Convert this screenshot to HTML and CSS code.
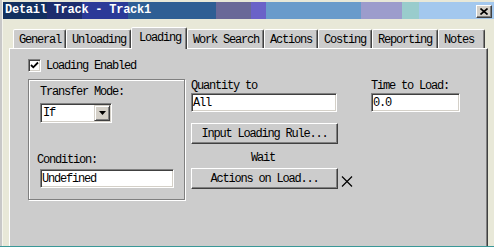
FILE: index.html
```html
<!DOCTYPE html>
<html lang="en">
<head>
    <meta charset="UTF-8">
    <title>Detail Track - Track1</title>
    <link rel="stylesheet" href="styles.css">
</head>
<body>
    <div class="window">
        <div class="titlebar">
            <span class="title">Detail Track - Track1</span>
            <button class="close">
                <svg width="8" height="7" viewBox="0 0 8 7">
                    <path d="M0.5 0.5 L7.5 6.5 M7.5 0.5 L0.5 6.5" stroke="#000" stroke-width="1.6"/>
                </svg>
            </button>
        </div>

        <div class="tabs">
            <div class="tab tab-general">General</div>
            <div class="tab tab-unloading">Unloading</div>
            <div class="tab tab-loading selected">Loading</div>
            <div class="tab tab-search">Work Search</div>
            <div class="tab tab-actions">Actions</div>
            <div class="tab tab-costing">Costing</div>
            <div class="tab tab-reporting">Reporting</div>
            <div class="tab tab-notes">Notes</div>
        </div>

        <div class="panel">
            <div class="check-row">
                <span class="checkbox">
                    <svg width="9" height="9" viewBox="0 0 9 9">
                        <polyline points="1,4 3.3,6.3 8,1.5" fill="none" stroke="#000" stroke-width="1.8"/>
                    </svg>
                </span>
                <span class="check-label">Loading Enabled</span>
            </div>

            <div class="content">
                <div class="group">
                    <div class="label">Transfer Mode:</div>
                    <div class="select">
                        <span class="select-value">If</span>
                        <span class="drop">
                            <svg width="7" height="4" viewBox="0 0 7 4"><polygon points="0,0 7,0 3.5,4" fill="#000"/></svg>
                        </span>
                    </div>
                    <div class="label condition">Condition:</div>
                    <div class="field field-condition">Undefined</div>
                </div>

                <div class="col-qty">
                    <div class="label">Quantity to</div>
                    <div class="field field-qty">All</div>
                    <button class="btn btn-rule">Input Loading Rule...</button>
                    <div class="wait">Wait</div>
                    <div class="action-row">
                        <button class="btn">Actions on Load...</button>
                        <svg class="clear" width="12" height="11" viewBox="0 0 12 11">
                            <path d="M1 0.5 L11 10.5 M11 0.5 L1 10.5" stroke="#000" stroke-width="1.2"/>
                        </svg>
                    </div>
                </div>

                <div class="col-time">
                    <div class="label">Time to Load:</div>
                    <div class="field field-time">0.0</div>
                </div>
            </div>
        </div>
    </div>
</body>
</html>
```

FILE: styles.css
```css
body {
    margin: 0;
    font-family: "Liberation Mono", "DejaVu Sans Mono", monospace;
    font-size: 12px;
    line-height: 14px;
    letter-spacing: -1.2px;
    color: #000;
}
.window {
    width: 494px;
    height: 246px;
    background: #e8e8d8;
    border-bottom: 1px solid #3a9898;
    box-shadow: inset 2px 0 #c8c8c8, inset 3px 0 #f4f4ec;
    overflow: hidden;
}
.titlebar {
    display: flex;
    justify-content: space-between;
    margin: 2px 0 0 3px;
    height: 17px;
    background: linear-gradient(to right,
        #12305f 0, #12305f 44px,
        #1d2d6e 44px, #1d2d6e 79px,
        #2b3a98 79px, #2b3a98 125px,
        #2e5e94 125px, #2e5e94 213px,
        #696898 213px, #696898 248px,
        #6a62c8 248px, #6a62c8 263px,
        #699bcb 263px, #699bcb 358px,
        #9c9ccc 358px, #9c9ccc 399px,
        #99cccc 399px, #99cccc 416px,
        #a3c8ee 416px);
}
.title {
    padding-left: 2px;
    color: #fff;
    font-weight: bold;
    line-height: 16px;
    letter-spacing: -0.25px;
}
.close {
    display: flex;
    align-items: center;
    justify-content: center;
    width: 16px;
    height: 13px;
    margin: 3px 2px 0 0;
    padding: 0;
    background: #d4d0c8;
    border: 1px solid;
    border-color: #fff #404040 #404040 #fff;
    box-shadow: inset -1px -1px #808080;
}

.tabs {
    display: flex;
    align-items: flex-end;
    height: 29px;
    padding-left: 13px;
}
.tab {
    box-sizing: border-box;
    height: 19px;
    padding: 3px 0 0 5px;
    background: #cccccc;
    border: 1px solid;
    border-bottom: none;
    border-color: #fff #404040 transparent #fff;
    border-radius: 2px 2px 0 0;
    box-shadow: inset -1px 0 #808080;
    white-space: nowrap;
}
.tab.selected {
    position: relative;
    z-index: 1;
    height: 22px;
    margin-bottom: -1px;
    padding-left: 7px;
}
.tab-general { width: 53px; }
.tab-unloading { width: 65px; }
.tab-loading { width: 56px; }
.tab-search { width: 77px; }
.tab-actions { width: 54px; }
.tab-costing { width: 54px; }
.tab-reporting { width: 66px; }
.tab-notes { width: 47px; }

.panel {
    box-sizing: border-box;
    width: 479px;
    height: 198px;
    margin-left: 9px;
    padding: 10px 0 0 18px;
    background: #cccccc;
    border-top: 1px solid #fff;
    border-left: 1px solid #fff;
    border-right: 1px solid #404040;
    box-shadow: inset -1px 0 #808080;
}
.check-row {
    display: flex;
    align-items: flex-start;
}
.checkbox {
    box-sizing: border-box;
    display: flex;
    align-items: center;
    justify-content: center;
    width: 13px;
    height: 13px;
    background: #fff;
    border: 1px solid;
    border-color: #808080 #fff #fff #808080;
    box-shadow: inset 1px 1px #404040, inset -1px -1px #d4d0c8;
}
.check-label {
    margin-left: 5px;
}

.content {
    display: flex;
    align-items: flex-start;
    margin-top: 6px;
}
.group {
    box-sizing: border-box;
    width: 157px;
    height: 121px;
    margin-right: 6px;
    padding: 5px 0 0 11px;
    border: 1px solid #808080;
    box-shadow: inset 1px 1px #fff, 1px 1px #fff;
}
.label {
    white-space: nowrap;
}
.condition {
    margin: 30px 0 0 -3px;
}
.select {
    box-sizing: border-box;
    display: flex;
    justify-content: space-between;
    width: 72px;
    height: 20px;
    margin-top: 4px;
    background: #fff;
    border: 1px solid;
    border-color: #808080 #fff #fff #808080;
    box-shadow: inset 1px 1px #404040, inset -1px -1px #d4d0c8;
}
.select-value {
    padding: 2px 0 0 2px;
}
.drop {
    box-sizing: border-box;
    display: flex;
    align-items: center;
    justify-content: center;
    width: 16px;
    height: 16px;
    margin: 1px 1px 0 0;
    background: #d4d0c8;
    border: 1px solid;
    border-color: #d4d0c8 #404040 #404040 #d4d0c8;
    box-shadow: inset 1px 1px #fff, inset -1px -1px #808080;
}
.field {
    box-sizing: border-box;
    height: 19px;
    padding: 2px 0 0 1px;
    overflow: hidden;
    background: #fff;
    border: 1px solid;
    border-color: #808080 #fff #fff #808080;
    box-shadow: inset 1px 1px #404040, inset -1px -1px #d4d0c8;
    white-space: nowrap;
}
.field-condition {
    width: 134px;
    margin-top: 2px;
}
.field-qty {
    width: 146px;
}
.field-time {
    width: 89px;
}

.col-qty {
    width: 147px;
    margin-right: 33px;
}
.btn {
    display: block;
    box-sizing: border-box;
    width: 147px;
    height: 21px;
    padding: 0;
    font: inherit;
    letter-spacing: inherit;
    line-height: 14px;
    color: #000;
    background: #cccccc;
    border: 1px solid;
    border-color: #fff #404040 #404040 #fff;
    box-shadow: inset -1px -1px #808080;
}
.btn-rule {
    margin-top: 11px;
}
.wait {
    margin-top: 7px;
    text-align: center;
    padding-right: 3px;
}
.action-row {
    display: flex;
    align-items: flex-end;
    margin-top: 3px;
}
.action-row .btn {
    flex-shrink: 0;
}
.clear {
    flex-shrink: 0;
    margin: 0 0 2px 3px;
}
```
